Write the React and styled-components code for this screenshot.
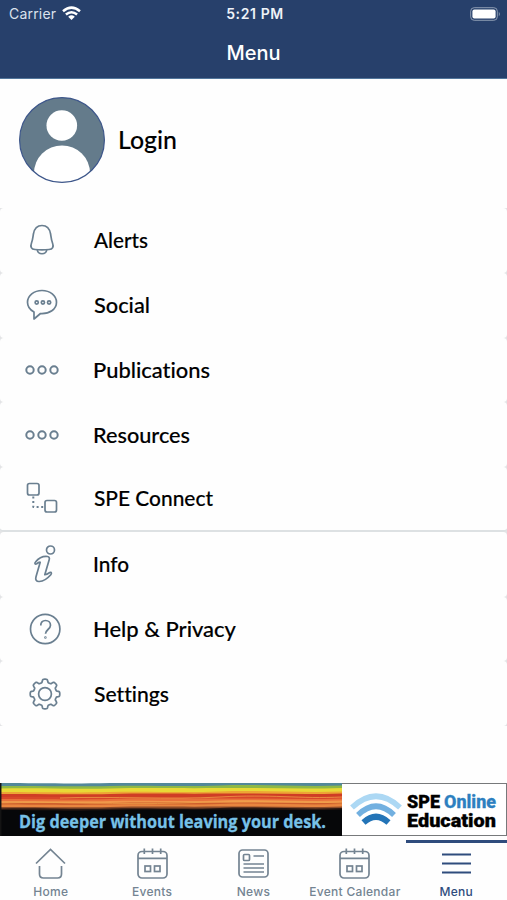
import React from 'react';
import styled, { createGlobalStyle } from 'styled-components';

const navy = '#27406b';
const slate = '#6a7f90';

const MENU_ITEMS = [
  { label: 'Alerts', icon: 'bell', width: 54, left: 94 },
  { label: 'Social', icon: 'chat', width: 56, left: 94 },
  { label: 'Publications', icon: 'dots', width: 117, left: 93 },
  { label: 'Resources', icon: 'dots', width: 97, left: 93 },
  { label: 'SPE Connect', icon: 'connect', width: 119, left: 94, divider: true },
  { label: 'Info', icon: 'info', width: 36, left: 93 },
  { label: 'Help & Privacy', icon: 'help', width: 143, left: 93 },
  { label: 'Settings', icon: 'gear', width: 75, left: 94 },
];

const TABS = [
  { label: 'Home', icon: 'home' },
  { label: 'Events', icon: 'calendar' },
  { label: 'News', icon: 'news' },
  { label: 'Event Calendar', icon: 'calendar' },
  { label: 'Menu', icon: 'menu', active: true },
];

// eight rounded teeth, sampled round the circle
const gearPath = () => {
  const steps = 192;
  const points = [];
  for (let i = 0; i < steps; i += 1) {
    const angle = (i * 2 * Math.PI) / steps;
    const radius = 13.2 + 1.6 * Math.tanh(2.6 * Math.cos(8 * angle) + 0.2);
    const x = 25 + radius * Math.sin(angle);
    const y = 24 - radius * Math.cos(angle);
    points.push(`${x.toFixed(2)} ${y.toFixed(2)}`);
  }
  return `M${points.join('L')}Z`;
};

// menu icons share a 48px box
const menuIcons = {
  bell: (
    <>
      <path d="M22 9.500c-5 0-7.700 3.300-8.600 8.500-.6 4-.7 5.800-1.900 9-1.500 3.800-.2 6.200 3.500 6.500 4.700.4 9.300.4 14 0 3.700-.3 5-2.700 3.500-6.500-1.200-3.200-1.300-5-1.900-9C29.700 12.800 27 9.500 22 9.500z" />
      <path d="M17.300 34c.7 5 8.700 5 9.400 0" />
    </>
  ),
  chat: (
    <>
      <path d="M22 9.500c-8 0-14.500 5-14.500 11.800 0 4.200 2.500 7.600 6.500 9.700v7l6.500-5.500c9 .5 16-4.200 16-11.200C36.500 14.500 30 9.500 22 9.500z" />
      <g strokeWidth="1.700">
        <circle cx="16.700" cy="21.500" r="1.600" />
        <circle cx="22.900" cy="21.500" r="1.600" />
        <circle cx="29.100" cy="21.500" r="1.600" />
      </g>
    </>
  ),
  dots: (
    <g strokeWidth="2">
      <circle cx="10" cy="24" r="3.700" />
      <circle cx="22" cy="24" r="3.700" />
      <circle cx="34" cy="24" r="3.700" />
    </g>
  ),
  connect: (
    <g strokeWidth="1.700">
      <rect x="7.500" y="9.500" width="11.500" height="11.500" rx="2" />
      <rect x="25" y="26.500" width="11.500" height="11.500" rx="2" />
      <path d="M13.300 22.500V33H24" strokeWidth="2" strokeDasharray="2 2.600" />
    </g>
  ),
  info: (
    <>
      <circle cx="30.500" cy="10" r="4" />
      <path d="M15.500 22c3.500-4.300 7.500-6 12-5.500 1.700.2 2.200 1.500 1.700 3.200l-4.400 15c2-.2 3.500-1.200 5-2.200 1.500-.7 2.200.8 1 2.200-3.700 4.200-7.500 6.500-11.500 6.800-3 .2-4.200-1.800-3.300-4.800l4.200-14.500c-1.500.3-2.500.8-3.500 1.500-1.500.9-2.500-.3-1.200-1.700z" />
    </>
  ),
  help: (
    <>
      <circle cx="25.200" cy="24" r="14.700" />
      <path d="M20.800 20.500c-.2-3 1.700-5 4.700-5s5 2 5 4.700c0 4-5 4.600-5 8.600" />
      <circle cx="25.400" cy="32.500" r=".4" />
    </>
  ),
  gear: (
    <>
      <path d={gearPath()} />
      <circle cx="25" cy="24" r="6.400" />
    </>
  ),
};

const tabIcons = {
  home: (
    <path d="M3 15.500L17.500 1.500 32 15.500M6.500 18v8q0 4 4 4h14q4 0 4-4v-8" />
  ),
  calendar: (
    <>
      <rect x="3" y="3.500" width="29" height="26.500" rx="4" />
      <path d="M3 10.300h29M9.300.5V6M17.500.5V6M25.700.5V6" />
      <rect x="10" y="18" width="5.500" height="5.500" />
      <rect x="19.500" y="18" width="5.500" height="5.500" />
    </>
  ),
  news: (
    <>
      <rect x="3" y="2" width="29" height="27" rx="3.500" />
      <rect x="7.500" y="6.500" width="6" height="6" rx="1" />
      <path d="M17.500 8h10.500M7.500 16H28M7.500 20H28M7.500 24H28" />
    </>
  ),
  menu: <path d="M3 6.500h29M3 15.500h29M3 24.500h29" strokeWidth="1.900" />,
};

const WifiIcon = () => (
  <svg width="19" height="15" viewBox="0 0 19 15" fill="none" stroke="white" strokeWidth="2.500">
    <path d="M1 5.200Q9.500-2 18 5.200M3.900 8.500q5.600-4.600 11.200 0" />
    <path d="M6.200 10.700q3.300-2.700 6.600 0L9.500 14z" fill="white" stroke="none" />
  </svg>
);

const BatteryIcon = () => (
  <svg width="31" height="14" viewBox="0 0 31 14">
    <rect x="0.700" y="0.700" width="26.600" height="12.600" rx="3.500" fill="none" stroke="#8d9bb2" />
    <rect x="2.400" y="2.400" width="23.200" height="9.200" rx="2" fill="white" />
    <path d="M28.800 4.700q2 2.300 0 4.600z" fill="#8d9bb2" />
  </svg>
);

const Avatar = () => (
  <svg width="86" height="86" viewBox="0 0 86 86">
    <defs>
      <clipPath id="avatar-clip">
        <circle cx="43" cy="43" r="42.500" />
      </clipPath>
    </defs>
    <g clipPath="url(#avatar-clip)">
      <rect width="86" height="86" fill="#647b8b" />
      <circle cx="42.800" cy="28.500" r="15.300" fill="white" />
      <ellipse cx="43" cy="76" rx="28" ry="27.500" fill="white" />
    </g>
    <circle cx="43" cy="43" r="42.400" fill="none" stroke="#3e578b" strokeWidth="1.200" />
  </svg>
);

const STRATA = [
  ['#52889a', 0], ['#8eb846', 3], ['#e8d936', 5.5], ['#eda535', 9],
  ['#cf3d25', 11], ['#d8472a', 14], ['#e8713a', 16], ['#f0964a', 18],
  ['#d0602d', 20], ['#e9853f', 21.5], ['#8a4a28', 24], ['#2b1812', 25.5], ['#060709', 27],
];

const Strata = () => (
  <svg width="342" height="53" viewBox="0 0 342 53">
    {STRATA.map(([color, y], i) => (
      <path
        key={color}
        fill={color}
        d={`M0 ${y} C40 ${y - (i % 3) / 2} 70 ${y + 1} 110 ${y} S180 ${y + (i % 2)} 220 ${y - 0.5} S300 ${y + 1} 342 ${y - 0.5} V53 H0Z`}
      />
    ))}
    <path
      d="M0 20C60 18 120 22 180 20S290 18 342 20M60 15C110 13 170 17 220 14S300 16 342 14"
      fill="none"
      stroke="#f0a44b"
      strokeWidth=".7"
    />
    <path d="M.7 0v53" stroke="#141414" strokeWidth="1.500" />
  </svg>
);

const SignalLogo = () => (
  <svg width="52" height="34" viewBox="0 0 52 34" fill="none">
    <path d="M2 14.500Q26-8 50 14.500" stroke="#acd8f4" strokeWidth="5.500" />
    <path d="M8 22Q26 4.500 44 22" stroke="#72b0e0" strokeWidth="5.500" />
    <path d="M13.500 29.500Q26 18 38.500 29.500" stroke="#2374b7" strokeWidth="6" />
  </svg>
);

// keeps a label at its set width whatever the fallback font
const FittedText = ({ width, height, size, weight, family, baseline, heavy = 0, color = 'black', children }) => (
  <TextCanvas width={width} height={height}>
    <text
      x="0"
      y={baseline}
      textLength={width}
      lengthAdjust="spacingAndGlyphs"
      fontSize={size}
      fontWeight={weight}
      fontFamily={family}
      fill={color}
      stroke={color}
      strokeWidth={heavy}
    >
      {children}
    </text>
  </TextCanvas>
);

const App = () => (
  <Screen>
    <GlobalStyle />
    <Header>
      <StatusBar>
        <Carrier>
          Carrier
          <WifiIcon />
        </Carrier>
        <Clock>5:21 PM</Clock>
        <Battery>
          <BatteryIcon />
        </Battery>
      </StatusBar>
      <Title>Menu</Title>
    </Header>
    <Profile>
      <Avatar />
      <FittedText width={59} height={36} size={25} weight={500} baseline={27} heavy={0.1} family="Lato, sans-serif">
        Login
      </FittedText>
    </Profile>
    <MenuList>
      {MENU_ITEMS.map(item => (
        <MenuRow key={item.label} $divider={item.divider}>
          <MenuIcon viewBox="0 0 48 48">{menuIcons[item.icon]}</MenuIcon>
          <MenuLabel $left={item.left}>
            <FittedText width={item.width} height={32} size={21.5} weight={500} baseline={24} heavy={0.15} family="Lato, sans-serif">
              {item.label}
            </FittedText>
          </MenuLabel>
        </MenuRow>
      ))}
    </MenuList>
    <Banner>
      <BannerArt>
        <Strata />
        <Slogan>
          <FittedText width={307} height={26} size={18.5} weight={700} baseline={19} heavy={0.3} color="#77c1e8" family="'Open Sans', sans-serif">
            Dig deeper without leaving your desk.
          </FittedText>
        </Slogan>
      </BannerArt>
      <Sponsor>
        <SignalLogo />
        <SponsorName>
          <SponsorLine>
            <FittedText width={33} height={19} size={17.5} weight={900} baseline={15} heavy={0.3} family="Roboto, sans-serif">
              SPE
            </FittedText>
            <FittedText width={52} height={19} size={17.5} weight={800} baseline={15} heavy={0.3} color="#2d7fc0" family="Roboto, sans-serif">
              Online
            </FittedText>
          </SponsorLine>
          <SponsorLine>
            <FittedText width={89} height={18} size={17.5} weight={900} baseline={15} heavy={0.3} family="Roboto, sans-serif">
              Education
            </FittedText>
          </SponsorLine>
        </SponsorName>
      </Sponsor>
    </Banner>
    <TabBar>
      {TABS.map(tab => (
        <Tab key={tab.label} $active={tab.active}>
          <TabIcon viewBox="0 0 35 34">{tabIcons[tab.icon]}</TabIcon>
          {tab.label}
        </Tab>
      ))}
    </TabBar>
  </Screen>
);

const GlobalStyle = createGlobalStyle`
  * {
    box-sizing: border-box;
  }
  body {
    margin: 0;
    background: #fefefe;
    font-family: Inter, sans-serif;
  }
  svg {
    display: block;
    flex: none;
  }
`;

const Screen = styled.div`
  display: flex;
  flex-direction: column;
  width: 507px;
  height: 900px;
  overflow: hidden;
`;

const Header = styled.header`
  height: 79px;
  background: ${navy};
  border-bottom: 1px solid #52769b;
  color: white;
`;

const StatusBar = styled.div`
  display: grid;
  grid-template-columns: 1fr auto 1fr;
  align-items: center;
  height: 27px;
  padding: 0 6px 0 9px;
`;

const Carrier = styled.div`
  display: flex;
  align-items: center;
  gap: 6px;
  font-size: 14px;
  letter-spacing: 0.2px;
  color: #dbe2ed;
`;

const Clock = styled.div`
  font-size: 14px;
  font-weight: 600;
  letter-spacing: 0.6px;
  color: #eef2f8;
`;

const Battery = styled.div`
  display: flex;
  justify-content: flex-end;
`;

const Title = styled.h1`
  margin: 13px 0 0;
  font-size: 20px;
  line-height: 26px;
  font-weight: 550;
  text-align: center;
`;

const Profile = styled.section`
  display: flex;
  align-items: center;
  gap: 13px;
  height: 129px;
  padding: 0 0 7px 19px;
`;

const TextCanvas = styled.svg`
  overflow: visible;
  font-variant-ligatures: none;
`;

const MenuList = styled.ul`
  margin: 0;
  padding: 0;
  list-style: none;
  background: #e3e4e6;
`;

const MenuRow = styled.li`
  display: flex;
  align-items: center;
  height: 64.75px;
  padding-left: 20px;
  border-bottom: ${({ $divider }) => ($divider ? '2px solid #dde1e3' : 'none')};
  border-radius: 4px;
  background: #fefefe;
`;

const MenuIcon = styled.svg`
  width: 48px;
  height: 48px;
  fill: none;
  stroke: ${slate};
  stroke-width: 1.7;
  stroke-linejoin: round;
`;

const MenuLabel = styled.div`
  margin-left: ${({ $left }) => $left - 68}px;
`;

const Banner = styled.section`
  display: flex;
  height: 53px;
  margin-top: 57px;
`;

const BannerArt = styled.div`
  display: grid;
  width: 342px;

  > * {
    grid-area: 1 / 1;
  }
`;

const Slogan = styled.div`
  align-self: end;
  padding: 0 0 1px 19px;
`;

const Sponsor = styled.div`
  display: flex;
  align-items: center;
  flex: 1;
  gap: 5px;
  padding-left: 8px;
  border: 1px solid #77797b;
  border-left: 0;
  background: white;
`;

const SponsorName = styled.div`
  padding-top: 4px;
`;

const SponsorLine = styled.div`
  display: flex;
  gap: 4px;
`;

const TabBar = styled.nav`
  display: grid;
  grid-template-columns: repeat(5, 1fr);
  height: 60px;
  margin-top: 4px;
  background: #fefefe;
`;

const Tab = styled.div`
  display: flex;
  flex-direction: column;
  align-items: center;
  padding-top: 5px;
  border-top: 3px solid ${({ $active }) => ($active ? '#2f4c7d' : 'transparent')};
  color: ${({ $active }) => ($active ? '#2f4c7d' : '#748492')};
  font-size: 12px;
  line-height: 16px;
  font-weight: 550;
  letter-spacing: 0.3px;
  white-space: nowrap;
`;

const TabIcon = styled.svg`
  width: 35px;
  height: 34px;
  margin-bottom: 1.5px;
  fill: none;
  stroke: currentColor;
  stroke-width: 1.7;
`;

export default App;
